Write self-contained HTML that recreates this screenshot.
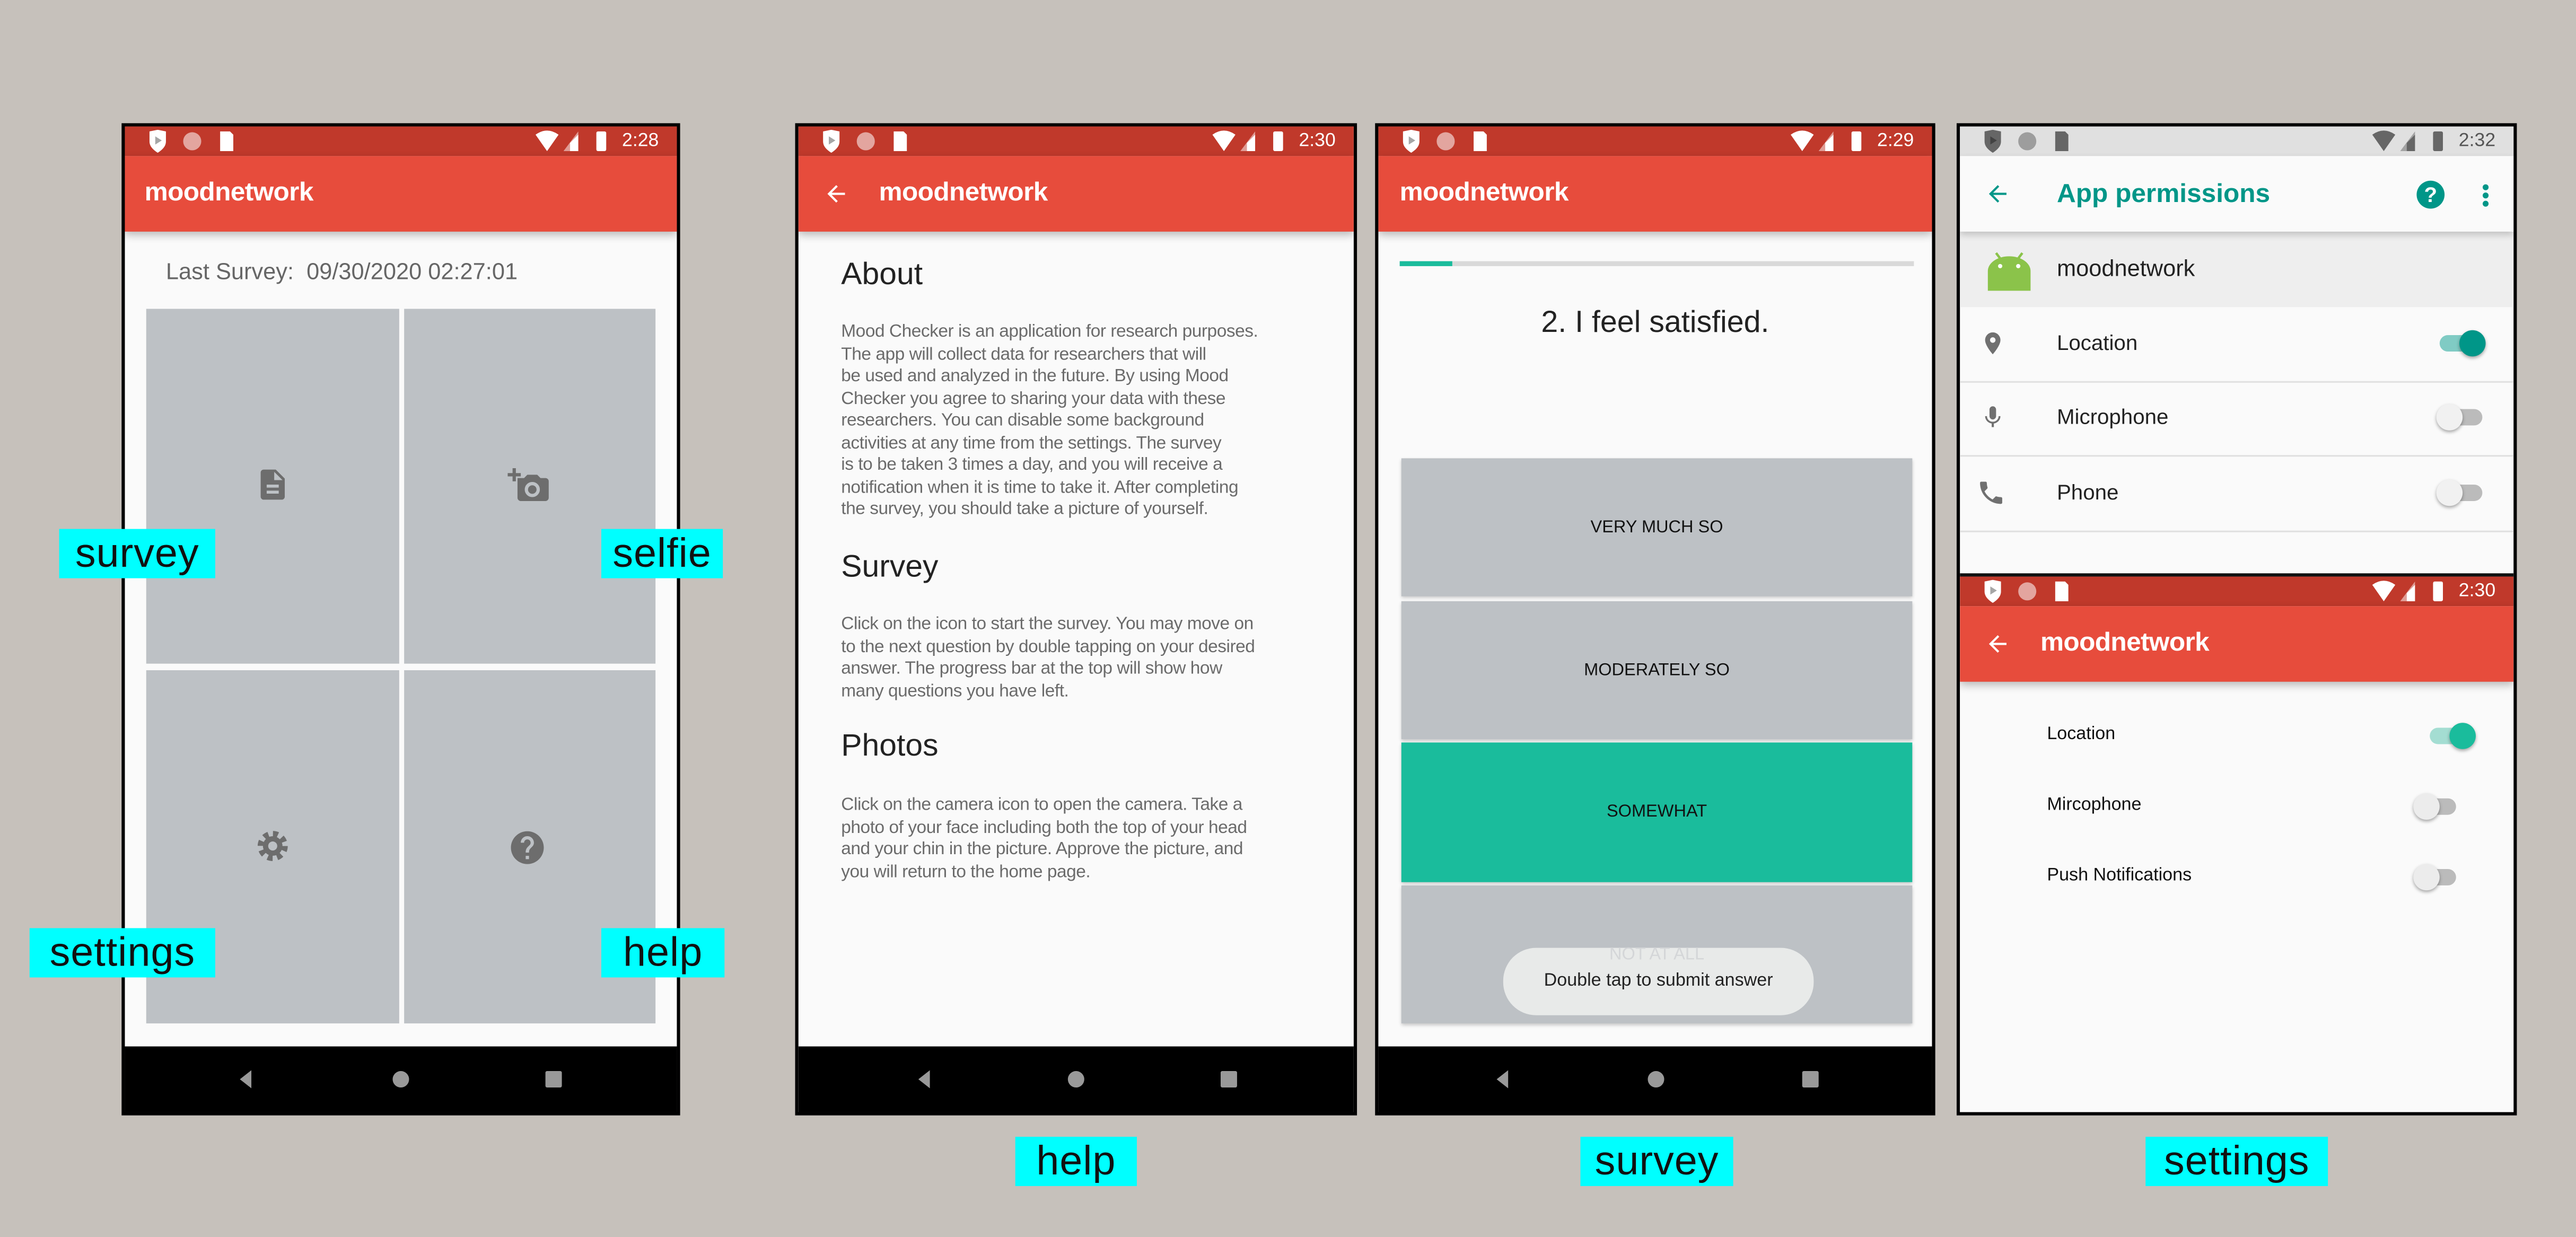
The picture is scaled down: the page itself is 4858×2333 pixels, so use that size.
<!DOCTYPE html>
<html><head><meta charset="utf-8"><style>
html,body{margin:0;padding:0;background:#c6c1bb;overflow:hidden}
body{width:4858px;height:2333px;position:relative}
#s{position:absolute;left:0;top:0;width:1568px;height:753px;transform:scale(3.0982);transform-origin:0 0;font-family:"Liberation Sans",Arial,sans-serif}
.ph{position:absolute;top:75px;height:600px;border:2px solid #000;background:#fafafa;overflow:hidden}
.sb{position:absolute;left:0;top:0;right:0;height:18px;background:#c0392b;color:#fff}
.sb .l{position:absolute;left:12px;top:2px}
.sb .r{position:absolute;right:40px;top:2px}
.sb .t{position:absolute;right:11px;top:2px;font-size:11.5px;line-height:14px}
.ab{position:absolute;left:0;right:0;top:18px;height:46px;background:#e74c3c;color:#fff;box-shadow:0 2px 5px rgba(0,0,0,.28);z-index:2}
.ab .ti{position:absolute;top:14px;font-size:16px;font-weight:bold;letter-spacing:-0.2px}
.nav{position:absolute;left:0;right:0;bottom:0;height:40px;background:#000}
.lab{position:absolute;background:#00ffff;color:#111;font-size:25px;line-height:30px;height:30px;text-align:center;letter-spacing:0.3px}
.tile{position:absolute;background:#bdc1c5}
.p{position:absolute;left:26px;font-size:10.8px;line-height:13.5px;color:#6b6b6b;white-space:pre;letter-spacing:-0.15px}
.h{position:absolute;left:26px;font-size:19px;color:#222}
.btn{position:absolute;left:14px;width:311px;background:#bdc1c5;font-size:10.5px;color:#111;text-align:center;box-shadow:0 1px 2px rgba(0,0,0,.2)}
.row{position:absolute;left:0;right:0;height:45px;border-bottom:1px solid #e0e0e0}
.row .tx{position:absolute;left:59px;top:14px;font-size:13px;color:#222}
.sw{position:absolute;width:30px;height:14px}
.sw .tr{position:absolute;left:2px;top:2px;width:26px;height:10px;border-radius:5px}
.sw .th{position:absolute;top:-1px;width:16px;height:16px;border-radius:50%;box-shadow:0 1px 2px rgba(0,0,0,.35)}
</style></head><body><div id="s">
<svg width="0" height="0" style="position:absolute">
<defs>
<symbol id="sl" viewBox="0 0 60 14"><path d="M3 1l5-1 5 1v6c0 3-2 5-5 7-3-2-5-4-5-7z" fill="currentColor"/><path d="M6.5 4v5l4-2.5z" fill="#000" opacity=".35"/><circle cx="29" cy="7" r="5.5" fill="currentColor" opacity=".55"/><path d="M46 1h6l2 2v10h-8z" fill="currentColor"/></symbol>
<symbol id="sr" viewBox="0 0 46 14"><path d="M0 3q7-5 14 0l-7 10z" fill="currentColor"/><path d="M26 1v12h-9z" fill="currentColor" opacity=".5"/><path d="M21 8l5-5v10h-5z" fill="currentColor"/><rect x="37" y="1" width="6" height="12" rx="1" fill="currentColor"/></symbol>
<symbol id="back" viewBox="0 0 24 24"><path d="M20 11H7.830l5.59-5.590L12 4l-8 8 8 8 1.41-1.41L7.83 13H20v-2z" fill="currentColor"/></symbol>
</defs></svg>

<!-- Phone 1 -->
<div class="ph" style="left:74px;width:336px">
 <div class="sb"><svg class="l" width="60" height="14"><use href="#sl"/></svg><svg class="r" width="46" height="14"><use href="#sr"/></svg><div class="t">2:28</div></div>
 <div class="ab"><div class="ti" style="left:12px">moodnetwork</div></div>
 <div style="position:absolute;left:25px;top:80px;font-size:14px;color:#666">Last Survey:&nbsp;&nbsp;09/30/2020 02:27:01</div>
 <div class="tile" style="left:13px;top:111px;width:154px;height:216px"></div>
 <div class="tile" style="left:170px;top:111px;width:153px;height:216px"></div>
 <div class="tile" style="left:13px;top:331px;width:154px;height:215px"></div>
 <div class="tile" style="left:170px;top:331px;width:153px;height:215px"></div>
 <svg style="position:absolute;left:79px;top:207px" width="22" height="22" viewBox="0 0 24 24"><path fill="#6d6d6d" d="M14 2H6c-1.1 0-2 .9-2 2v16c0 1.1.9 2 2 2h12c1.1 0 2-.9 2-2V8l-6-6zm2 16H8v-2h8v2zm0-4H8v-2h8v2zm-3-5V3.5L18.5 9H13z"/></svg>
 <svg style="position:absolute;left:233px;top:207px" width="26" height="24" viewBox="0 0 26 24"><path fill="#6d6d6d" d="M3 1h2v3h3v2H5v3H3V6H0V4h3z"/><path fill="#6d6d6d" d="M6 7h4l2-2h6l2 2h3a2 2 0 0 1 2 2v10a2 2 0 0 1-2 2H8a2 2 0 0 1-2-2z"/><circle cx="15" cy="14" r="3.6" fill="none" stroke="#bdc1c5" stroke-width="2"/></svg>
 <svg style="position:absolute;left:79px;top:427px" width="22" height="22" viewBox="0 0 24 24"><circle cx="12" cy="12" r="8" fill="none" stroke="#6d6d6d" stroke-width="4" stroke-dasharray="3.3 3"/><circle cx="12" cy="12" r="6.5" fill="#6d6d6d"/><circle cx="12" cy="12" r="3" fill="#bdc1c5"/></svg>
 <svg style="position:absolute;left:233px;top:427px" width="24" height="24" viewBox="0 0 24 24"><path fill="#6d6d6d" d="M12 2C6.48 2 2 6.48 2 12s4.48 10 10 10 10-4.48 10-10S17.52 2 12 2zm1 17h-2v-2h2v2zm2.07-7.75l-.9.92C13.45 12.9 13 13.5 13 15h-2v-.5c0-1.1.45-2.1 1.17-2.83l1.24-1.26c.37-.36.59-.86.59-1.41 0-1.1-.9-2-2-2s-2 .9-2 2H8c0-2.21 1.79-4 4-4s4 1.79 4 4c0 .88-.36 1.68-.93 2.250z"/></svg>
 <div class="nav"><svg width="336" height="40"><path d="M70 20l7-5.5v11z" fill="#999"/><circle cx="168" cy="20" r="5" fill="#999"/><rect x="256" y="15" width="10" height="10" rx="1" fill="#999"/></svg></div>
</div>

<!-- Phone 2 -->
<div class="ph" style="left:484px;width:338px">
 <div class="sb"><svg class="l" width="60" height="14"><use href="#sl"/></svg><svg class="r" width="46" height="14"><use href="#sr"/></svg><div class="t">2:30</div></div>
 <div class="ab"><svg style="position:absolute;left:15px;top:15px;color:#fff" width="16" height="16"><use href="#back"/></svg><div class="ti" style="left:49px">moodnetwork</div></div>
 <div class="h" style="top:80px">About</div>
 <div class="p" style="top:119px">Mood Checker is an application for research purposes.
The app will collect data for researchers that will
be used and analyzed in the future. By using Mood
Checker you agree to sharing your data with these
researchers. You can disable some background
activities at any time from the settings. The survey
is to be taken 3 times a day, and you will receive a
notification when it is time to take it. After completing
the survey, you should take a picture of yourself.</div>
 <div class="h" style="top:258px">Survey</div>
 <div class="p" style="top:297px">Click on the icon to start the survey. You may move on
to the next question by double tapping on your desired
answer. The progress bar at the top will show how
many questions you have left.</div>
 <div class="h" style="top:367px">Photos</div>
 <div class="p" style="top:407px">Click on the camera icon to open the camera. Take a
photo of your face including both the top of your head
and your chin in the picture. Approve the picture, and
you will return to the home page.</div>
 <div class="nav"><svg width="338" height="40"><path d="M73 20l7-5.5v11z" fill="#999"/><circle cx="169" cy="20" r="5" fill="#999"/><rect x="257" y="15" width="10" height="10" rx="1" fill="#999"/></svg></div>
</div>

<!-- Phone 3 -->
<div class="ph" style="left:837px;width:337px">
 <div class="sb"><svg class="l" width="60" height="14"><use href="#sl"/></svg><svg class="r" width="46" height="14"><use href="#sr"/></svg><div class="t">2:29</div></div>
 <div class="ab"><div class="ti" style="left:13px">moodnetwork</div></div>
 <div style="position:absolute;left:13px;top:82px;width:313px;height:3px;background:#d9d9d9"><div style="width:32px;height:3px;background:#1abc9c"></div></div>
 <div style="position:absolute;left:0;right:0;top:108px;text-align:center;font-size:18.5px;color:#222">2. I feel satisfied.</div>
 <div class="btn" style="top:202px;height:84px;line-height:84px">VERY MUCH SO</div>
 <div class="btn" style="top:289px;height:84px;line-height:84px">MODERATELY SO</div>
 <div class="btn" style="top:375px;height:85px;line-height:85px;background:#1abc9c">SOMEWHAT</div>
 <div class="btn" style="top:462px;height:84px"></div>
 <div style="position:absolute;left:14px;width:311px;top:498px;text-align:center;font-size:10.5px;color:#d4d6d8;z-index:3">NOT AT ALL</div>
 <div style="position:absolute;left:76px;top:500px;width:189px;height:41px;border-radius:20px;background:rgba(233,235,234,.97);font-size:11px;color:#222;text-align:center;line-height:41px;z-index:2">Double tap to submit answer</div>
 <div class="nav"><svg width="337" height="40"><path d="M72 20l7-5.5v11z" fill="#999"/><circle cx="169" cy="20" r="5" fill="#999"/><rect x="258" y="15" width="10" height="10" rx="1" fill="#999"/></svg></div>
</div>

<!-- Phone 4 -->
<div class="ph" style="left:1191px;width:337px">
 <div class="sb" style="background:#e0e0e0;color:#666"><svg class="l" width="60" height="14"><use href="#sl"/></svg><svg class="r" width="46" height="14"><use href="#sr"/></svg><div class="t" style="color:#555">2:32</div></div>
 <div style="position:absolute;left:0;right:0;top:18px;height:46px;background:#fafafa;box-shadow:0 2px 4px rgba(0,0,0,.2);z-index:2">
  <svg style="position:absolute;left:15px;top:15px;color:#009688" width="16" height="16"><use href="#back"/></svg>
  <div style="position:absolute;left:59px;top:15px;font-size:16px;font-weight:bold;color:#009688">App permissions</div>
  <div style="position:absolute;left:278px;top:15px;width:17px;height:17px;border-radius:50%;background:#009688;color:#fff;font-size:13px;font-weight:bold;text-align:center;line-height:17px">?</div>
  <svg style="position:absolute;left:317px;top:16px" width="6" height="16"><circle cx="3" cy="3" r="1.8" fill="#009688"/><circle cx="3" cy="8" r="1.8" fill="#009688"/><circle cx="3" cy="13" r="1.8" fill="#009688"/></svg>
 </div>
 <div class="row" style="top:64px;background:#eeeeee;border:none;height:46px"><svg style="position:absolute;left:16px;top:9px" width="28" height="28" viewBox="0 0 28 28"><path d="M6 4l3 4M22 4l-3 4" stroke="#8bc34a" stroke-width="1.5"/><path d="M1 15a13 9 0 0 1 26 0v12H1z" fill="#8bc34a"/><circle cx="8.5" cy="12" r="1.3" fill="#fff"/><circle cx="19.5" cy="12" r="1.3" fill="#fff"/></svg><div class="tx" style="font-size:14px">moodnetwork</div></div>
 <div class="row" style="top:110px"><svg style="position:absolute;left:12px;top:13px" width="16" height="18" viewBox="0 0 24 24"><path fill="#707070" d="M12 2C8.13 2 5 5.13 5 9c0 5.25 7 13 7 13s7-7.75 7-13c0-3.87-3.13-7-7-7zm0 9.5c-1.38 0-2.5-1.12-2.5-2.5s1.12-2.5 2.5-2.5 2.5 1.12 2.5 2.5-1.12 2.5-2.5 2.5z"/></svg><div class="tx">Location</div>
  <div class="sw" style="left:290px;top:15px"><div class="tr" style="background:#80cbc4"></div><div class="th" style="left:14px;background:#009688"></div></div></div>
 <div class="row" style="top:155px"><svg style="position:absolute;left:12px;top:13px" width="16" height="18" viewBox="0 0 24 24"><path fill="#707070" d="M12 14c1.66 0 3-1.34 3-3V5c0-1.66-1.34-3-3-3S9 3.34 9 5v6c0 1.66 1.34 3 3 3zm5.3-3c0 3-2.54 5.1-5.3 5.1S6.7 14 6.7 11H5c0 3.41 2.72 6.23 6 6.72V21h2v-3.28c3.28-.48 6-3.3 6-6.72h-1.7z"/></svg><div class="tx">Microphone</div>
  <div class="sw" style="left:290px;top:15px"><div class="tr" style="background:#bbb"></div><div class="th" style="left:0;background:#f1f1f1"></div></div></div>
 <div class="row" style="top:201px"><svg style="position:absolute;left:10px;top:13px" width="18" height="18" viewBox="0 0 24 24"><path fill="#707070" d="M6.62 10.79c1.44 2.83 3.76 5.14 6.59 6.59l2.2-2.2c.27-.27.67-.36 1.02-.24 1.12.37 2.33.57 3.57.57.55 0 1 .45 1 1V20c0 .55-.45 1-1 1-9.39 0-17-7.61-17-17 0-.55.45-1 1-1h3.5c.55 0 1 .45 1 1 0 1.25.2 2.45.57 3.57.11.35.03.74-.25 1.02l-2.2 2.2z"/></svg><div class="tx">Phone</div>
  <div class="sw" style="left:290px;top:15px"><div class="tr" style="background:#bbb"></div><div class="th" style="left:0;background:#f1f1f1"></div></div></div>
 <div style="position:absolute;left:0;right:0;top:272px;height:2px;background:#111"></div>
 <div style="position:absolute;left:0;right:0;top:274px;bottom:0;background:#fafafa">
  <div class="sb"><svg class="l" width="60" height="14"><use href="#sl"/></svg><svg class="r" width="46" height="14"><use href="#sr"/></svg><div class="t">2:30</div></div>
  <div class="ab"><svg style="position:absolute;left:15px;top:15px;color:#fff" width="16" height="16"><use href="#back"/></svg><div class="ti" style="left:49px">moodnetwork</div></div>
  <div style="position:absolute;left:53px;top:90px;font-size:11px;color:#111">Location</div>
  <div class="sw" style="left:284px;top:90px"><div class="tr" style="background:#a4ddd2"></div><div class="th" style="left:14px;background:#1abc9c"></div></div>
  <div style="position:absolute;left:53px;top:133px;font-size:11px;color:#111">Mircophone</div>
  <div class="sw" style="left:276px;top:133px"><div class="tr" style="left:6px;width:20px;background:#bbb"></div><div class="th" style="left:0;background:#ececec"></div></div>
  <div style="position:absolute;left:53px;top:176px;font-size:11px;color:#111">Push Notifications</div>
  <div class="sw" style="left:276px;top:176px"><div class="tr" style="left:6px;width:20px;background:#bbb"></div><div class="th" style="left:0;background:#ececec"></div></div>
 </div>
</div>

<div class="lab" style="left:36px;top:322px;width:95px">survey</div>
<div class="lab" style="left:366px;top:322px;width:74px">selfie</div>
<div class="lab" style="left:18px;top:565px;width:113px">settings</div>
<div class="lab" style="left:366px;top:565px;width:75px">help</div>
<div class="lab" style="left:618px;top:692px;width:74px">help</div>
<div class="lab" style="left:962px;top:692px;width:93px">survey</div>
<div class="lab" style="left:1306px;top:692px;width:111px">settings</div>
</div></body></html>
